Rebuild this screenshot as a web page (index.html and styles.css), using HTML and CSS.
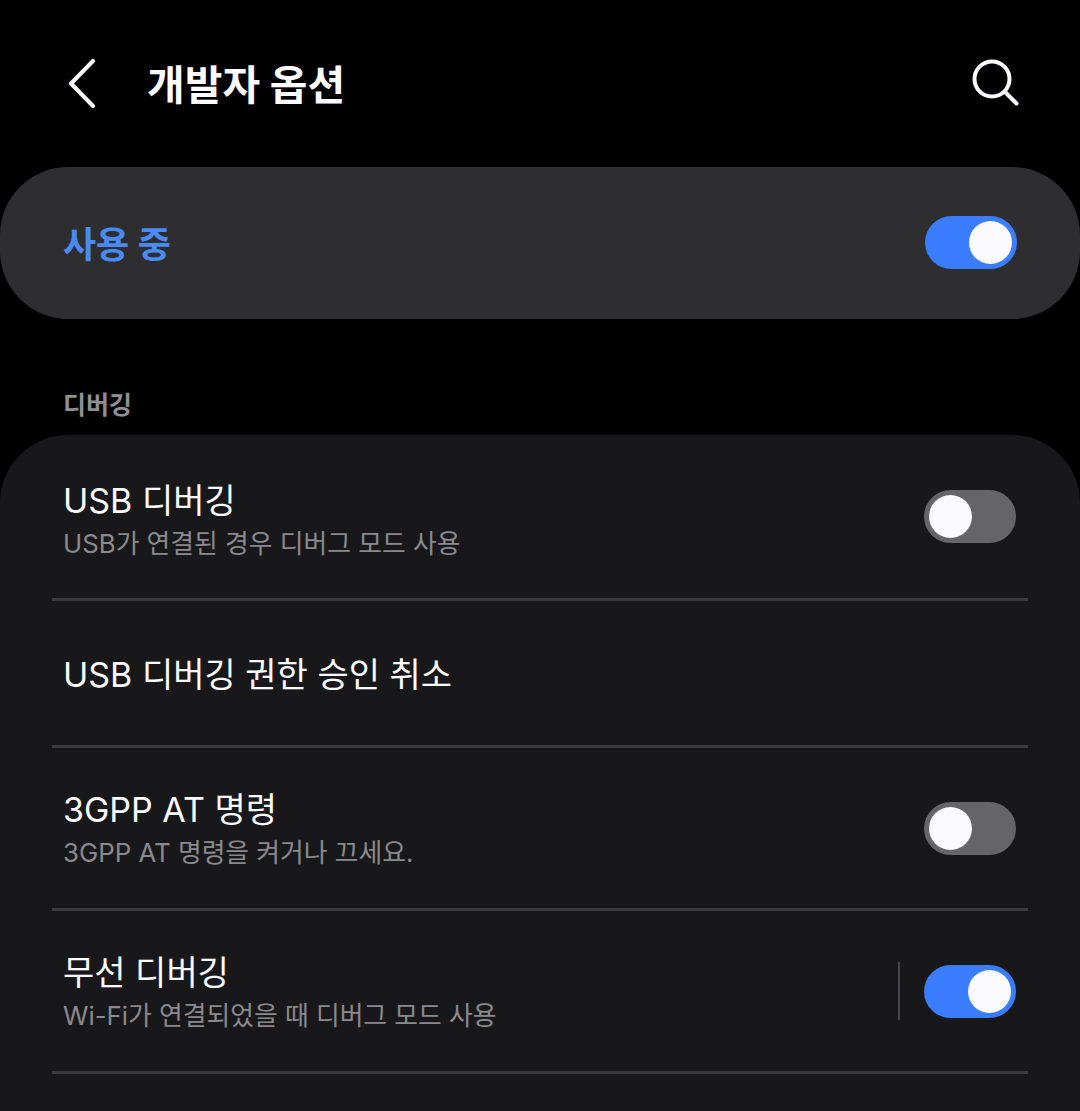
FILE: index.html
```html
<!DOCTYPE html>
<html lang="ko">
  <head>
    <meta charset="utf-8">
    <title>개발자 옵션</title>
    <link rel="stylesheet" href="styles.css">
  </head>
  <body>
    <div class="header">
      <svg class="back-icon" width="28" height="50" viewBox="0 0 28 50">
        <path d="M25 2 L3 24.5 L25 47" />
      </svg>
      <span class="header-title">개발자 옵션</span>
      <svg class="search-icon" width="48" height="48" viewBox="0 0 48 48">
        <circle cx="21" cy="21" r="17.5" />
        <path d="M34 34 L45.5 45.5" />
      </svg>
    </div>

    <div class="master-card">
      <span class="master-label">사용 중</span>
      <div class="switch on"><div class="knob"></div></div>
    </div>

    <div class="section-title">디버깅</div>

    <div class="list-card">
      <div class="row row-first">
        <div class="row-text">
          <div class="row-title">USB 디버깅</div>
          <div class="row-sub">USB가 연결된 경우 디버그 모드 사용</div>
        </div>
        <div class="switch"><div class="knob"></div></div>
      </div>
      <div class="divider"></div>
      <div class="row row-plain">
        <div class="row-text">
          <div class="row-title">USB 디버깅 권한 승인 취소</div>
        </div>
      </div>
      <div class="divider"></div>
      <div class="row">
        <div class="row-text">
          <div class="row-title">3GPP AT 명령</div>
          <div class="row-sub">3GPP AT 명령을 켜거나 끄세요.</div>
        </div>
        <div class="switch"><div class="knob"></div></div>
      </div>
      <div class="divider"></div>
      <div class="row">
        <div class="row-text">
          <div class="row-title">무선 디버깅</div>
          <div class="row-sub">Wi-Fi가 연결되었을 때 디버그 모드 사용</div>
        </div>
        <div class="vline"></div>
        <div class="switch on"><div class="knob"></div></div>
      </div>
      <div class="divider"></div>
    </div>
  </body>
</html>
```

FILE: styles.css
```css
html,
body {
  margin: 0;
  height: 1111px;
  overflow: hidden;
  background-color: #000;
  font-family: "Inter", "Noto Sans CJK KR", sans-serif;
}
.header {
  display: flex;
  align-items: center;
  height: 167px;
  padding: 0 61px 0 68px;
  box-sizing: border-box;
}
.back-icon path,
.search-icon path,
.search-icon circle {
  fill: none;
  stroke: #fbfaff;
  stroke-width: 4;
  stroke-linecap: round;
  stroke-linejoin: round;
}
.back-icon {
  margin-right: 51px;
}
.search-icon {
  margin-bottom: 3px;
}
.header-title {
  flex: 1;
  margin-bottom: 4px;
  font-size: 41px;
  font-weight: 700;
  color: #fbfaff;
}
.master-card {
  display: flex;
  align-items: center;
  justify-content: space-between;
  height: 152px;
  padding: 0 63px;
  box-sizing: border-box;
  border-radius: 68px;
  background-color: #2e2e30;
}
.master-label {
  margin-bottom: 3px;
  font-size: 36px;
  font-weight: 700;
  color: #4a8af5;
}
.master-card .switch {
  margin-bottom: 1px;
}
.switch {
  flex: none;
  display: flex;
  align-items: center;
  width: 92px;
  height: 53px;
  padding: 0 5px;
  box-sizing: border-box;
  border-radius: 27px;
  background-color: #656569;
}
.switch.on {
  justify-content: flex-end;
  background-color: #3a7dff;
}
.knob {
  width: 43px;
  height: 43px;
  border-radius: 50%;
  background-color: #fbfaff;
}
.section-title {
  height: 116px;
  padding: 66px 63px 0;
  box-sizing: border-box;
  font-size: 25px;
  font-weight: 700;
  color: #8f8f93;
}
.list-card {
  height: 676px;
  border-radius: 68px 68px 0 0;
  background-color: #18181a;
}
.row {
  display: flex;
  align-items: center;
  height: 160px;
  padding: 0 64px 0 63px;
  box-sizing: border-box;
}
.row-first {
  height: 163px;
}
.row-plain {
  height: 144px;
}
.row-text {
  flex: 1;
  padding-top: 4px;
}
.row-first .row-text {
  padding-top: 10px;
}
.row-title {
  font-size: 34px;
  line-height: 42px;
  color: #fbfaff;
}
.row-sub {
  margin-top: 3px;
  font-size: 25.8px;
  line-height: 38px;
  color: #8a8a8e;
}
.divider {
  height: 3px;
  margin: 0 52px;
  background-color: #3c3c3e;
}
.vline {
  flex: none;
  width: 2px;
  height: 58px;
  margin-right: 24px;
  background-color: #47474a;
}
```
